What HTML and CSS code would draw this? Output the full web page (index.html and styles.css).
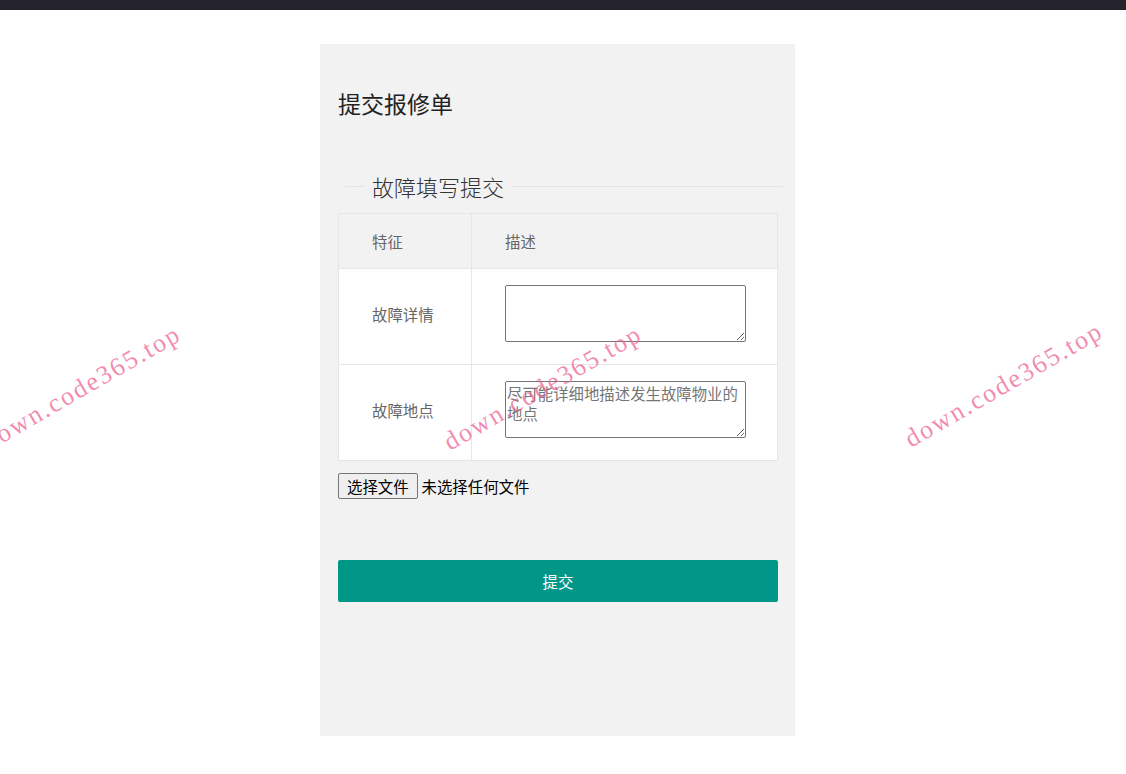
FILE: index.html
```html
<!DOCTYPE html>
<html lang="zh-CN">
<head>
<meta charset="utf-8">
<title>提交报修单</title>
<link rel="stylesheet" href="styles.css">
</head>
<body>
<div class="topbar"></div>
<div class="panel">
  <h1 class="title">提交报修单</h1>
  <fieldset class="field-title">
    <legend>故障填写提交</legend>
  </fieldset>
  <table class="form-table">
    <colgroup>
      <col class="col-a">
      <col class="col-b">
    </colgroup>
    <thead>
      <tr><th>特征</th><th>描述</th></tr>
    </thead>
    <tbody>
      <tr>
        <td>故障详情</td>
        <td><textarea class="area"></textarea></td>
      </tr>
      <tr>
        <td>故障地点</td>
        <td><textarea class="area" placeholder="尽可能详细地描述发生故障物业的地点"></textarea></td>
      </tr>
    </tbody>
  </table>
  <div class="file-row">
    <button type="button" class="file-btn">选择文件</button>
    <span class="file-name">未选择任何文件</span>
  </div>
  <button type="button" class="submit">提交</button>
</div>
<span class="wm wm-1">down.code365.top</span>
<span class="wm wm-2">down.code365.top</span>
<span class="wm wm-3">down.code365.top</span>
</body>
</html>
```
FILE: styles.css
```css
html, body {
  margin: 0;
  padding: 0;
  background: #ffffff;
  font-family: "Noto Sans CJK SC", "Noto Sans", sans-serif;
  overflow: hidden;
}
.topbar {
  height: 10px;
  background: #24232b;
}
.panel {
  position: relative;
  width: 475px;
  height: 692px;
  margin: 34px 0 0 320px;
  padding: 0 17px 0 18px;
  box-sizing: border-box;
  background: #f2f2f2;
}
.title {
  margin: 0;
  padding-top: 43px;
  font-size: 23px;
  line-height: 32px;
  font-weight: 400;
  color: #222;
}
.field-title {
  margin: 52px -5px 12px 7px;
  padding: 0;
  border: none;
  border-top: 1px solid #e4e4e4;
  min-width: 0;
}
.field-title legend {
  margin-left: 20px;
  padding: 0 7px;
  font-size: 22px;
  line-height: 30px;
  font-weight: 300;
  color: #333;
}
.form-table {
  width: 440px;
  table-layout: fixed;
  border-collapse: collapse;
  border: 1px solid #e6e6e6;
  font-size: 15.4px;
  color: #666;
}
.form-table .col-a {
  width: 133px;
}
.form-table th,
.form-table td {
  border: 1px solid #e6e6e6;
  text-align: left;
  font-weight: 400;
  vertical-align: middle;
  padding: 0 0 0 33px;
}
.form-table th {
  height: 54px;
  background: #f2f2f2;
}
.form-table td {
  background: #ffffff;
  padding-top: 16px;
  padding-bottom: 22px;
}
.area {
  display: block;
  width: 241px;
  height: 57px;
  box-sizing: border-box;
  margin: 0;
  padding: 1px 1px;
  border: 1px solid #767676;
  border-radius: 2px;
  background: #fff;
  font-family: "Noto Sans CJK SC", "Noto Sans", sans-serif;
  font-size: 15.4px;
  line-height: 1.3;
  color: #333;
  resize: vertical;
}
.area::placeholder {
  color: #757575;
}
.file-row {
  display: flex;
  align-items: center;
  gap: 4px;
  margin-top: 12px;
  height: 26px;
}
.file-btn {
  height: 26px;
  padding: 0 8px;
  border: 1px solid #767676;
  border-radius: 2px;
  background: #efefef;
  font-family: "Noto Sans CJK SC", "Noto Sans", sans-serif;
  font-size: 15.4px;
  color: #000;
  line-height: 24px;
}
.file-name {
  font-size: 15.4px;
  color: #000;
}
.submit {
  display: block;
  width: 440px;
  height: 42px;
  margin-top: 61px;
  border: none;
  border-radius: 2px;
  background: #009688;
  color: #fff;
  font-family: "Noto Sans CJK SC", "Noto Sans", sans-serif;
  font-size: 15.4px;
}
.wm {
  position: absolute;
  transform: translate(-50%, -50%) rotate(-30deg);
  font-family: "Liberation Serif", serif;
  font-size: 26px;
  letter-spacing: 2px;
  color: rgba(236, 96, 143, 0.72);
  white-space: nowrap;
  pointer-events: none;
}
.wm-1 { left: 82px; top: 388px; }
.wm-2 { left: 543px; top: 388px; }
.wm-3 { left: 1004px; top: 385px; }
```
